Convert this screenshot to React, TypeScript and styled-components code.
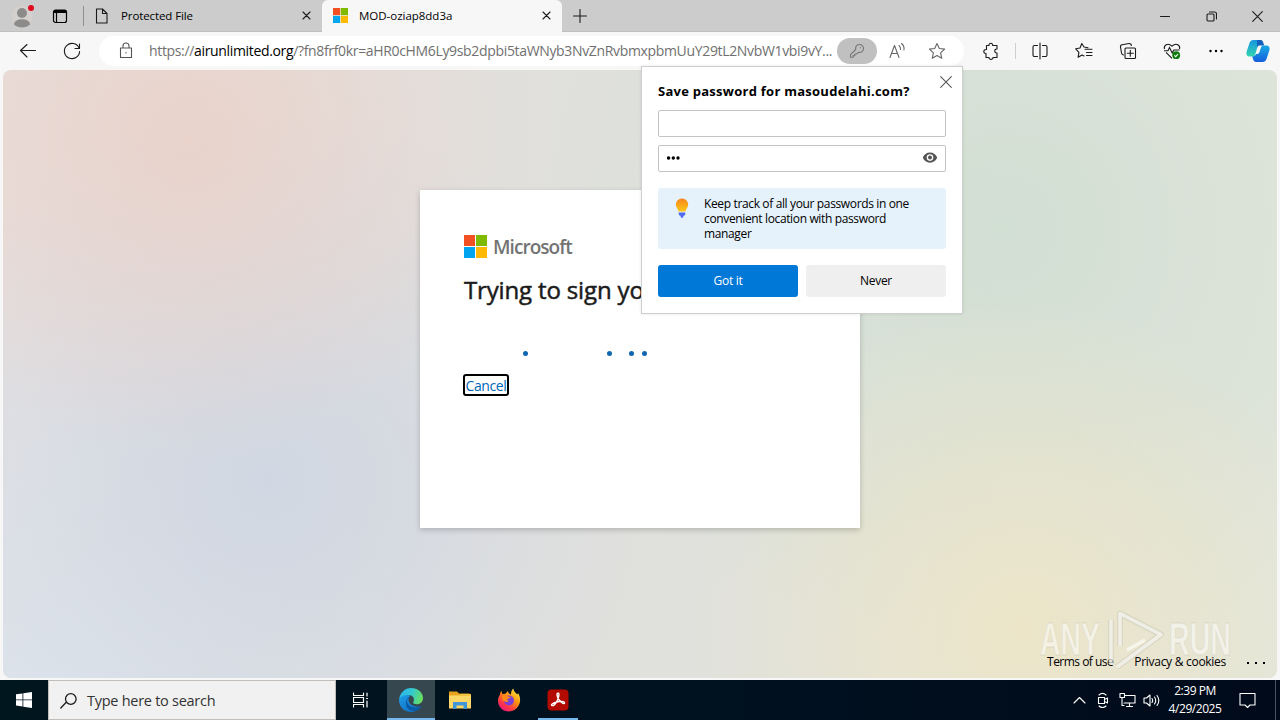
import React from "react"
import styled, {createGlobalStyle, css} from "styled-components"

const GlobalStyle = createGlobalStyle`
    * { box-sizing: border-box; }
    body {
        margin: 0;
        overflow: hidden;
        font-family: "Open Sans", "Noto Sans", sans-serif;
        color: #000;
    }
    svg { display: block; flex: none; }
`

const Screen = styled.div`
    width: 1280px;
    height: 720px;
    display: flex;
    flex-direction: column;
    background: #f7f7f7;
    overflow: hidden;
`

const Label = styled.span<{ $size: number, $spacing?: number, $color?: string, $weight?: number }>`
    font-size: ${({$size}) => $size}px;
    letter-spacing: ${({$spacing}) => $spacing ?? 0}px;
    color: ${({$color}) => $color ?? "#000"};
    font-weight: ${({$weight}) => $weight ?? 400};
    white-space: nowrap;
`

/* ---- tab strip ---- */

const TabStrip = styled.div`
    height: 32px;
    display: flex;
    background: #cccccc;
    box-shadow: inset 0 -1px #c0c0c0;
    flex: none;
`

const StripIcon = styled.div<{ $width: number }>`
    width: ${({$width}) => $width}px;
    display: flex;
    align-items: center;
    justify-content: center;
`

const StripDivider = styled.div`
    width: 1px;
    height: 20px;
    margin: 6px 0 0 7px;
    background: #8f8f8f;
`

const Tab = styled.div<{ $width: number, $active?: boolean }>`
    width: ${({$width}) => $width}px;
    height: 32px;
    display: flex;
    align-items: center;
    padding: 0 11px 1px 10px;
    ${({$active}) => $active && css`
        background: #f7f7f7;
        border-radius: 6px 6px 0 0;
        padding-left: 11px;
    `}

    ${Label} {
        flex: 1;
        margin-left: 11px;
    }
`

const WindowButtons = styled.div`
    margin-left: auto;
    display: flex;
`

/* ---- toolbar ---- */

const Toolbar = styled.div`
    height: 38px;
    display: flex;
    align-items: center;
    padding: 0 2px 0 6px;
    flex: none;
`

const ToolButton = styled.div<{ $width?: number }>`
    width: ${({$width}) => $width ?? 44}px;
    height: 32px;
    display: flex;
    align-items: center;
    justify-content: center;
    flex: none;
`

const Omnibox = styled.div`
    width: 865px;
    height: 30px;
    margin: 0 5px;
    display: flex;
    align-items: center;
    border-radius: 16px;
    background: #fff;
    padding: 0 6px;
`

const Url = styled.div`
    width: 690px;
    padding-left: 2px;
    font-size: 14px;
    letter-spacing: -0.34px;
    white-space: nowrap;
    color: #707070;
    line-height: 20px;

    b {
        font-weight: 400;
        color: #000;
    }
`

const KeyPill = styled.div`
    width: 40px;
    height: 26px;
    border-radius: 13px;
    background: #c0c0c0;
    display: flex;
    align-items: center;
    justify-content: center;
`

const ToolDivider = styled.div`
    width: 1px;
    height: 16px;
    margin: 0 2px;
    background: #cfcfcf;
`

/* ---- page ---- */

const Page = styled.main`
    position: relative;
    height: 608px;
    margin: 0 3px;
    border-radius: 8px;
    display: flex;
    flex-direction: column;
    align-items: center;
    background:
        radial-gradient(circle at 185px 70px, rgba(234, 210, 202, 0.9), rgba(234, 210, 202, 0) 320px),
        radial-gradient(circle at 265px 410px, rgba(208, 215, 226, 1), rgba(210, 218, 228, 0) 380px),
        radial-gradient(circle at 60px 620px, rgba(221, 229, 237, 1), rgba(221, 229, 237, 0) 480px),
        radial-gradient(circle at 1020px 560px, rgba(236, 229, 200, 1), rgba(236, 229, 200, 0) 330px),
        radial-gradient(circle at 1000px 160px, rgba(210, 223, 211, 1), rgba(210, 223, 211, 0) 460px),
        linear-gradient(90deg, #e7dedb 0%, #e0e0dd 45%, #e3e6dc 100%);
`

const SignInCard = styled.section`
    width: 440px;
    height: 338px;
    margin-top: 120px;
    padding: 44px;
    background: #fff;
    box-shadow: 0 2px 6px rgba(0, 0, 0, 0.2);
    display: flex;
    flex-direction: column;
    align-items: flex-start;
`

const Brand = styled.div`
    height: 25px;
    display: flex;
    align-items: center;
    gap: 6px;
`

const Heading = styled.h1`
    margin: 15px 0 0;
    font-size: 24px;
    line-height: 32px;
    font-weight: 400;
    letter-spacing: -0.15px;
    -webkit-text-stroke: 0.5px #1b1b1b;
    color: #1b1b1b;
    white-space: nowrap;
`

const Progress = styled.div`
    height: 5px;
    margin-top: 45px;
    padding-left: 59px;
    display: flex;
`

const ProgressDot = styled.i<{ $gap: number }>`
    width: 5px;
    height: 5px;
    margin-right: ${({$gap}) => $gap}px;
    border-radius: 50%;
    background: #1066b0;
`

const CancelLink = styled.a`
    margin: 18px 0 0 -1px;
    height: 22px;
    width: 46px;
    border: 2px solid #000;
    border-radius: 3px;
    font-size: 14px;
    line-height: 19px;
    letter-spacing: -0.4px;
    color: #0067b8;
    white-space: nowrap;
    text-align: center;
`

const PageFooter = styled.footer`
    margin: auto 0 0 auto;
    height: 32px;
    padding: 0 12px 1px 0;
    display: flex;
    align-items: center;

    ${Label} { margin-right: 21px; }
`

const Watermark = styled.svg`
    position: absolute;
    right: 36px;
    bottom: 4px;
`

/* ---- password bubble ---- */

const Bubble = styled.aside`
    position: absolute;
    left: 641px;
    top: 66px;
    width: 322px;
    height: 248px;
    padding: 15px 16px 16px;
    display: flex;
    flex-direction: column;
    background: #fff;
    border: 1px solid #cfcfcf;
    box-shadow: 0 0 3px rgba(0, 0, 0, 0.1);
`

const BubbleClose = styled.div`
    position: absolute;
    right: 10px;
    top: 9px;
`

const BubbleTitle = styled.h2`
    margin: 0 0 9px;
    font-size: 13px;
    line-height: 19px;
    font-weight: 700;
    letter-spacing: 0.26px;
    white-space: nowrap;
`

const Field = styled.div`
    height: 27px;
    margin-bottom: 8px;
    padding: 0 7px 0 8px;
    display: flex;
    align-items: center;
    justify-content: space-between;
    border: 1px solid #c4c4c4;
    border-radius: 2px;
`

const Hint = styled.div`
    height: 61px;
    margin-top: 8px;
    padding: 8px 16px 0 17px;
    display: flex;
    gap: 15px;
    background: #e5f1fb;
    border-radius: 3px;
    font-size: 12px;
    line-height: 15px;
    letter-spacing: -0.36px;
    white-space: nowrap;
`

const Actions = styled.div`
    margin-top: 16px;
    display: flex;
    gap: 8px;
`

const ActionButton = styled.button<{ $primary?: boolean }>`
    flex: 1;
    height: 32px;
    border: 0;
    border-radius: 3px;
    padding: 0 0 1px;
    font: 12px "Open Sans", sans-serif;
    letter-spacing: -0.3px;
    background: ${({$primary}) => $primary ? "#0078d7" : "#efefef"};
    color: ${({$primary}) => $primary ? "#fff" : "#000"};
`

/* ---- taskbar ---- */

const Taskbar = styled.div`
    height: 40px;
    margin-top: auto;
    display: flex;
    background: linear-gradient(90deg, #00161e, #00101f 60%, #000a1a);
    flex: none;
`

const TaskCell = styled.div<{ $width: number, $state?: "active" | "open" }>`
    width: ${({$width}) => $width}px;
    display: flex;
    align-items: center;
    justify-content: center;
    ${({$state}) => $state === "active" && css`background: #36474f;`}
    ${({$state}) => $state && css`box-shadow: inset 0 -2px #76b9ed;`}
`

const SearchBox = styled.div`
    width: 288px;
    display: flex;
    align-items: center;
    gap: 10px;
    padding-left: 11px;
    background: #f1f1f1;
    border: 1px solid #c3bdb9;
`

const Tray = styled.div`
    margin-left: auto;
    display: flex;
    align-items: center;
`

const Clock = styled.div`
    width: 64px;
    display: flex;
    flex-direction: column;
    align-items: center;
    line-height: 18px;
`

const ShowDesktop = styled.div`
    width: 5px;
    height: 40px;
    border-left: 1px solid #4b545e;
`

const MicrosoftSquares = ({size}: { readonly size: number }) => <svg width={size} height={size} viewBox="0 0 23 23">
    <path fill="#f25022" d="M0 0h11v11H0z"/>
    <path fill="#7fba00" d="M12 0h11v11H12z"/>
    <path fill="#00a4ef" d="M0 12h11v11H0z"/>
    <path fill="#ffb900" d="M12 12h11v11H12z"/>
</svg>

interface LineIconProps {
    readonly d: string
    readonly size?: number
    readonly color?: string
    readonly stroke?: number
}

const LineIcon = ({d, size = 20, color = "#1b1b1b", stroke = 1.1}: LineIconProps) =>
    <svg width={size} height={size} viewBox={`0 0 ${size} ${size}`} fill="none" stroke={color} strokeWidth={stroke}
         strokeLinecap="round" strokeLinejoin="round">
        <path d={d}/>
    </svg>

const paths = {
    file: "M2.5 1h6l4.500 4.500V15h-10.500zM8.500 1v4.500h4.500",
    tabClose: "M1 1l7 7M8 1l-7 7",
    plus: "M7 .5v13M.5 7h13",
    back: "M17.500 9.500H3M9 3.500l-6.500 6L9 16",
    refresh: "M17 7A7.600 7.600 0 1 0 17.600 10.500M17.500 3v4.500h-4.500",
    lock: "M4.500 7h11v9.500h-11zM7 7V5a3 3 0 0 1 6 0v2M10 11.500v.5",
    star: "M10 2.500l2.300 5 5.300.6-4 3.700 1.100 5.400L10 14.500l-4.700 2.700 1.100-5.400-4-3.700 5.300-.6z",
    key: "M8.700 8.500a4 4 0 1 1 2.800 2.800L9.500 13H7.800v1.600H6.200v1.600H3.500v-2.500zM13.300 6.600v.1",
    puzzle: "M5.500 4.500H8C7.600 1.500 12 1.500 11.700 4.500H16V8C13 7.600 13 12.300 16 12V16.500H12C12.300 19 7.700 19 8 16.500H5V12.500C2 12.800 2 8.200 5.500 8.500z",
    split: "M10 2v16M7.500 4.500H4.500a1.500 1.500 0 0 0-1.500 1.500v8a1.500 1.500 0 0 0 1.500 1.500h3M12.500 4.500h3A1.500 1.500 0 0 1 17 6v8a1.500 1.500 0 0 1-1.500 1.500h-3",
    favorites: "M11 8.300h7M12.500 11.500h5.500M12.500 14.500h5.500M14 6.700l-4-.7L7.800 2.500 6 7l-4.300.8 3.200 3.500-.8 5L8 14l2 1",
    collections: "M8 7h8.500a1 1 0 0 1 1 1v8.500a1 1 0 0 1-1 1H8a1 1 0 0 1-1-1V8a1 1 0 0 1 1-1zM12.300 9.200v6M9.300 12.200h6M5.500 14A2.500 2.500 0 0 1 3.500 12L2.500 6a2 2 0 0 1 1.600-2.300l7-1.200A2 2 0 0 1 13.300 4.500",
}

const ProfileIcon = () => <svg width="28" height="28" viewBox="0 0 28 28">
    <circle cx="14" cy="14" r="10.500" fill="#d3d0ce"/>
    <circle cx="14" cy="11" r="5" fill="#8d8b8a"/>
    <path d="M6 22.500c0-7 16-7 16 0-4 4-12 4-16 0z" fill="#8d8b8a"/>
    <circle cx="23" cy="6" r="3" fill="#e00b1c"/>
</svg>

const HealthIcon = () => <svg width="20" height="20" viewBox="0 0 20 20" fill="none" stroke="#1b1b1b" strokeWidth="1.1">
    <path d="M2.500 8C1.500 4.500 5.500 1 10 5.200 14.500 1 18.500 4.500 17.500 8M4 11.300l6 6M2 9.700h4L7.500 6.500 10.200 12l1.600-3h5.700"/>
    <circle cx="14.200" cy="14.200" r="3.900" fill="#107c10" stroke="none"/>
    <path stroke="#fff" d="M12.400 14.400l1.300 1.200 2.400-2.600"/>
</svg>

const CopilotIcon = () => <svg width="24" height="24" viewBox="0 0 24 24">
    <defs>
        <linearGradient id="copilotA" x1="0" y1="0" x2="0" y2="1">
            <stop offset="0" stopColor="#1694df"/><stop offset="1" stopColor="#32d6b0"/>
        </linearGradient>
        <linearGradient id="copilotB" x1="0" y1="0" x2="0" y2="1">
            <stop offset="0" stopColor="#1aa9e5"/><stop offset="1" stopColor="#145fdc"/>
        </linearGradient>
    </defs>
    <path fill="url(#copilotA)" d="M7.500 1H14c1.700 0 2.500 1.400 3 3l-3.500 1.500c-1 0-1.700.8-2 2L9.400 15c-.5 1.700-1.500 2.500-3 2.500H4C1 17.500 0 15.500.500 13L3.500 4C4.200 2 5.500 1 7.500 1z"/>
    <path fill="#1460bd" d="M11 1h3.300C16.500 1 17 2.500 17.500 4.500l.8 2h-5c-1.500 0-1.700 1-2.200 2.500z"/>
    <path fill="url(#copilotB)" d="M16.500 23H10c-1.700 0-2.500-1.400-3-3l-.8-2.500c2 0 3.300-1 3.900-2.500h1c1.400 0 2-.8 2.400-2L15 8.500C15.500 7 16.500 6.500 18 6.500h2c3 0 4 2 3.500 4.500l-3 9c-.7 2-2 3-4 3z"/>
</svg>

const BulbIcon = () => <svg width="14" height="22" viewBox="0 0 14 22">
    <defs>
        <linearGradient id="bulb" x1="0" y1="0" x2="0" y2="1">
            <stop offset="0" stopColor="#f6851e"/><stop offset="1" stopColor="#ffc814"/>
        </linearGradient>
    </defs>
    <path fill="url(#bulb)" d="M7 2.500a6 6 0 0 1 6.200 6c0 3-2.200 4-2.700 7h-7c-.5-3-2.700-4-2.700-7a6 6 0 0 1 6.200-6z"/>
    <path fill="#4f6bed" d="M3.700 16.500h6.600v1.300c0 1.200-.7 2-1.800 2l-.5 2H6l-.5-2c-1.100 0-1.800-.8-1.800-2z"/>
</svg>

const EdgeIcon = () => <svg width="24" height="24" viewBox="0 0 24 24">
    <defs>
        <linearGradient id="edgeTop" x1="0" y1="0.300" x2="1" y2="0.500">
            <stop offset="0" stopColor="#2bb5ee"/><stop offset="0.500" stopColor="#32c8cf"/><stop offset="1" stopColor="#6ae05c"/>
        </linearGradient>
        <linearGradient id="edgeLow" x1="0" y1="0" x2="0.600" y2="1">
            <stop offset="0" stopColor="#1f9de5"/><stop offset="1" stopColor="#1275c8"/>
        </linearGradient>
    </defs>
    <path fill="url(#edgeLow)" d="M0 12C1 5 7 4 11 8c-4 4 0 12 10.500 10.500C19 22 16 24 12 24 5 24 0 18.500 0 12z"/>
    <path fill="#0c5ba5" d="M8 12c-.4 6 6 9 13.500 6.500.8-.3 1 .4.500 1C18 24.500 10 24.500 7.500 18.500 6 15 7 10 11 8.500z"/>
    <path fill="url(#edgeTop)" d="M.1 11.500C1 4.500 6 0 12 0c7 0 12 4.800 12 10 0 3.800-2.800 6.300-6 6.300-2.500 0-4.300-1-3.800-2 1.800-2.800.5-7.300-5-7.300-4.500 0-8 1.500-9.100 4.500z"/>
</svg>

const ExplorerIcon = () => <svg width="24" height="22" viewBox="0 0 24 22">
    <path fill="#e8a21d" d="M1 2.500h8l2 2h10.500V8H1z"/>
    <path fill="#ffd767" d="M1 6h22v13.500H1z"/>
    <path fill="#f5c342" d="M1 6h10l2-1h10v2H1z"/>
    <path fill="#3f97d8" d="M5 13h14v7h-3.500v-3.500h-7V20H5z"/>
</svg>

const FirefoxIcon = () => <svg width="24" height="24" viewBox="0 0 24 24">
    <defs>
        <linearGradient id="fox" x1="0.900" y1="0" x2="0.200" y2="1">
            <stop offset="0" stopColor="#fff44f"/><stop offset="0.400" stopColor="#ff980e"/>
            <stop offset="0.750" stopColor="#ff3647"/><stop offset="1" stopColor="#e31587"/>
        </linearGradient>
    </defs>
    <path fill="url(#fox)" d="M4.500 3l.8 3 3-.3L11 3c.1 2 1.300 3 3 3.500C14 4 14.500 2 16.300.500c.3 3 2.500 4 4 6l.8-1.500c2.500 4 2.700 9 .4 12.800C19.400 21.500 16 23.500 12 23.500 5.500 23.500 1 18.500 1 13c0-3 .8-4.500 1.800-6C3 5.500 3.500 4 4.500 3z"/>
    <circle cx="12" cy="12.500" r="5" fill="#7a3fd6"/>
    <path fill="#ff8a16" d="M5 8c2-1.500 4-.8 5.500.3 1 .7 2.300.4 3.400.4-.2 1.700-3 1.500-3.400 2.600-.3 1 .2 1.800 1.500 2-2.500 1.800-5 .3-6.500-1.500z"/>
</svg>

const AcrobatIcon = () => <svg width="22" height="22" viewBox="0 0 22 22">
    <rect x=".5" y=".5" width="21" height="21" rx="4" fill="#b30b00"/>
    <path fill="none" stroke="#fff" strokeWidth="1.400" d="M5 16.500c-1.800-.5 1-3 6-3.800 4.500-.8 7 .3 6.500 1.500-.8 1.500-7-2.300-7.500-8.700-.1-1.800 2-2 2 0 0 4.500-4.500 12-7 11z"/>
</svg>

const AnyRunMark = () => <Watermark width="204" height="64" viewBox="0 0 204 64" fill="none">
    <g fontFamily="Liberation Sans Narrow, Liberation Sans, sans-serif" fontSize="46" fontWeight="700" fill="#fff"
       fillOpacity="0.5" stroke="#b9b6a4" strokeOpacity="0.35" strokeWidth="0.8">
        <text x="3" y="45" textLength="60" lengthAdjust="spacingAndGlyphs">ANY</text>
        <text x="132" y="45" textLength="62" lengthAdjust="spacingAndGlyphs">RUN</text>
    </g>
    <g strokeLinejoin="round">
        <path stroke="#b9b6a4" strokeOpacity="0.3" strokeWidth="6" d="M83 36V3.500L124 24.500 80 57M74 10v44"/>
        <path stroke="#fff" strokeOpacity="0.6" strokeWidth="3.500" d="M83 36V3.500L124 24.500 80 57M74 10v44M90 40l18-10"/>
    </g>
</Watermark>

const TopTabs = () => <TabStrip>
    <StripIcon $width={44}><ProfileIcon/></StripIcon>
    <StripIcon $width={32}>
        <svg width="16" height="16" viewBox="0 0 16 16" fill="none" stroke="#000" strokeWidth="1.200">
            <rect x="1.500" y="2" width="13" height="12.500" rx="2"/>
            <path strokeWidth="3" d="M2 3.500h12"/>
            <path d="M4.500 4v10"/>
        </svg>
    </StripIcon>
    <StripDivider/>
    <Tab $width={238}>
        <LineIcon d={paths.file} size={16}/>
        <Label $size={11.5} $spacing={-0.1}>Protected File</Label>
        <LineIcon d={paths.tabClose} size={9}/>
    </Tab>
    <Tab $width={240} $active>
        <MicrosoftSquares size={15}/>
        <Label $size={11.5} $spacing={-0.02}>MOD-oziap8dd3a</Label>
        <LineIcon d={paths.tabClose} size={9}/>
    </Tab>
    <StripIcon $width={35}><LineIcon d={paths.plus} size={14}/></StripIcon>
    <WindowButtons>
        <StripIcon $width={46}><LineIcon d="M.5 5.500h9" size={10}/></StripIcon>
        <StripIcon $width={46}>
            <LineIcon d="M2 3h5a1 1 0 0 1 1 1v5a1 1 0 0 1-1 1H2a1 1 0 0 1-1-1V4a1 1 0 0 1 1-1zM3.500 1H8.500a2 2 0 0 1 2 2v5" size={11}/>
        </StripIcon>
        <StripIcon $width={46}><LineIcon d="M.7.7l9.600 9.600M10.300.7L.7 10.300" size={11}/></StripIcon>
    </WindowButtons>
</TabStrip>

const AddressBar = () => <Toolbar>
    <ToolButton><LineIcon d={paths.back}/></ToolButton>
    <ToolButton><LineIcon d={paths.refresh}/></ToolButton>
    <Omnibox>
        <ToolButton $width={42}><LineIcon d={paths.lock} color="#555"/></ToolButton>
        <Url>https://<b>airunlimited.org</b>/?fn8frf0kr=aHR0cHM6Ly9sb2dpbi5taWNyb3NvZnRvbmxpbmUuY29tL2NvbW1vbi9vY...</Url>
        <KeyPill><LineIcon d={paths.key} color="#777"/></KeyPill>
        <ToolButton $width={40}>
            <LineIcon d="M3 16.500L7.500 4.500 12 16.500M4.500 12.500h6M12 4.500c1.200 1 1.600 2.300 1.500 4M14.500 2.500c2 1.500 2.800 4 2.500 6.500" color="#666"/>
        </ToolButton>
        <ToolButton $width={40}><LineIcon d={paths.star} color="#666"/></ToolButton>
    </Omnibox>
    <ToolButton><LineIcon d={paths.puzzle}/></ToolButton>
    <ToolDivider/>
    <ToolButton><LineIcon d={paths.split}/></ToolButton>
    <ToolButton><LineIcon d={paths.favorites}/></ToolButton>
    <ToolButton><LineIcon d={paths.collections}/></ToolButton>
    <ToolButton><HealthIcon/></ToolButton>
    <ToolButton>
        <svg width="14" height="4" viewBox="0 0 14 4">
            <circle cx="1.500" cy="2" r="1.200"/><circle cx="7" cy="2" r="1.200"/><circle cx="12.500" cy="2" r="1.200"/>
        </svg>
    </ToolButton>
    <ToolButton $width={40}><CopilotIcon/></ToolButton>
</Toolbar>

const SavePasswordBubble = () => <Bubble>
    <BubbleClose><LineIcon d="M.7.7l10.600 10.600M11.300.7L.7 11.300" size={12} color="#555"/></BubbleClose>
    <BubbleTitle>Save password for masoudelahi.com?</BubbleTitle>
    <Field/>
    <Field>
        <svg width="13" height="5" viewBox="0 0 13 5">
            <circle cx="1.600" cy="2" r="1.700"/><circle cx="6.300" cy="2" r="1.700"/><circle cx="11" cy="2" r="1.700"/>
        </svg>
        <svg width="16" height="13" viewBox="0 0 16 13">
            <path fill="#555" fillRule="evenodd" d="M8 .4c3.500 0 6 2 7.200 5.200-1.200 3.200-3.700 5.200-7.200 5.200S2 8.800.8 5.600C2 2.400 4.500.4 8 .4zM8 2.300a3.300 3.300 0 1 0 0 6.600 3.300 3.300 0 0 0 0-6.600z"/>
            <circle cx="8" cy="5.600" r="2" fill="#555"/>
        </svg>
    </Field>
    <Hint>
        <BulbIcon/>
        <div>Keep track of all your passwords in one<br/>convenient location with password<br/>manager</div>
    </Hint>
    <Actions>
        <ActionButton $primary>Got it</ActionButton>
        <ActionButton>Never</ActionButton>
    </Actions>
</Bubble>

const BottomBar = () => <Taskbar>
    <TaskCell $width={48}>
        <svg width="16" height="16" viewBox="0 0 16 16" fill="#fff">
            <path d="M0 2.300l6.500-.9v6.100H0zM7.300 1.300L16 0v7.500H7.300zM0 8.300h6.500v6.200L0 13.600zM7.300 8.300H16V16l-8.700-1.300z"/>
        </svg>
    </TaskCell>
    <SearchBox>
        <LineIcon d="M6 10.500L.8 16M5.500 7a5.300 5.300 0 1 0 10.600 0 5.300 5.300 0 0 0-10.600 0z" size={17} stroke={1.3}/>
        <Label $size={14.500} $spacing={-0.27} $color="#333">Type here to search</Label>
    </SearchBox>
    <TaskCell $width={51}>
        <LineIcon d="M.5 1v2.500h10V1M.5 15v-2.500h10V15M.5 5.500h10v5H.500zM14 1v3M14 9v6M13.500 6.500h1" size={17} color="#fff" stroke={1.2}/>
    </TaskCell>
    <TaskCell $width={48} $state="active"><EdgeIcon/></TaskCell>
    <TaskCell $width={49}><ExplorerIcon/></TaskCell>
    <TaskCell $width={49}><FirefoxIcon/></TaskCell>
    <TaskCell $width={5}/>
    <TaskCell $width={40} $state="open"><AcrobatIcon/></TaskCell>
    <Tray>
        <TaskCell $width={24}><LineIcon d="M1 9l5.500-5.500L12 9" size={13} color="#fff"/></TaskCell>
        <TaskCell $width={24}>
            <LineIcon d="M3.500 5.500h6v6h-6zM9.500 7.500l3-1.500v5l-3-1.500M4 3c2-1.800 5-1.800 7 0M4 14c2 1.800 5 1.800 7 0" size={16} color="#fff"/>
        </TaskCell>
        <TaskCell $width={24}>
            <LineIcon d="M5.500 3.500h10.500v7.500H5M10.500 11v3.500M7.500 14.500h6M1 1.500h4.500v4H1zM3 5.500v8h2" size={17} color="#fff"/>
        </TaskCell>
        <TaskCell $width={24}>
            <LineIcon d="M1 6h2.500L7 3v11l-3.500-3H1zM9 6.500c.8 1.200.8 2.800 0 4M11.500 5c1.400 2 1.400 5 0 7M14 3.500c2.200 3 2.200 7 0 10" size={17} color="#fff"/>
        </TaskCell>
        <Clock>
            <Label $size={12} $spacing={-0.45} $color="#fff">2:39 PM</Label>
            <Label $size={12} $spacing={-0.45} $color="#fff">4/29/2025</Label>
        </Clock>
        <TaskCell $width={40}>
            <LineIcon d="M1 1.500h15v11.500h-5l-2.500 2.500L6 13H1z" size={17} color="#fff"/>
        </TaskCell>
        <TaskCell $width={8}/>
        <ShowDesktop/>
    </Tray>
</Taskbar>

const dotGaps = [79, 17, 8, 0]

export default function App() {
    return <Screen>
        <GlobalStyle/>
        <TopTabs/>
        <AddressBar/>
        <Page>
            <SignInCard>
                <Brand>
                    <MicrosoftSquares size={23}/>
                    <Label $size={19} $spacing={-0.95} $color="#737373" $weight={600}>Microsoft</Label>
                </Brand>
                <Heading>Trying to sign you in</Heading>
                <Progress>
                    {dotGaps.map((gap, index) => <ProgressDot key={index} $gap={gap}/>)}
                </Progress>
                <CancelLink>Cancel</CancelLink>
            </SignInCard>
            <AnyRunMark/>
            <PageFooter>
                <Label $size={12} $spacing={-0.52}>Terms of use</Label>
                <Label $size={12} $spacing={-0.28}>Privacy &amp; cookies</Label>
                <svg width="18" height="4" viewBox="0 0 18 4"><path d="M0 2h2v2H0zM8 2h2v2H8zM16 2h2v2h-2z"/></svg>
            </PageFooter>
        </Page>
        <BottomBar/>
        <SavePasswordBubble/>
    </Screen>
}
